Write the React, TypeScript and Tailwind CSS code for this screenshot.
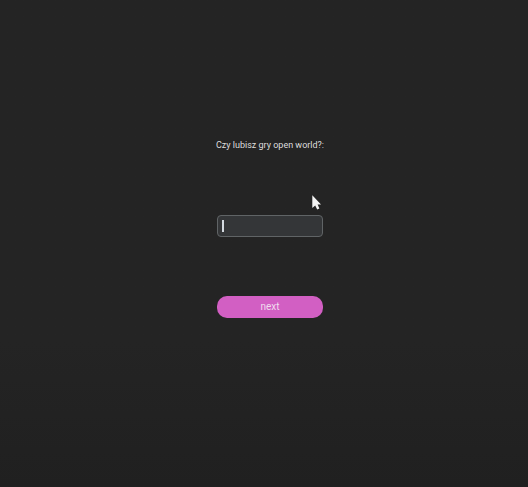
import { useState } from "react";

function Pointer() {
  return (
    <svg
      aria-hidden="true"
      viewBox="0 0 9 15"
      className="pointer-events-none absolute right-px bottom-full mb-1.5 h-[15px] w-[9px]"
    >
      <path d="M0.3 0.2V13L3.2 10.4L5.2 14.6L7.4 13.6L5.6 9.4H9Z" fill="#f4f4f4" />
    </svg>
  );
}

export default function App() {
  const [answer, setAnswer] = useState("");

  return (
    <main className="min-h-screen bg-linear-to-b from-[#242424] from-70% to-[#202020] pt-[137px] pl-3 font-['Roboto',sans-serif]">
      <form
        className="flex flex-col items-center"
        onSubmit={(event) => event.preventDefault()}
      >
        <label htmlFor="answer" className="text-[9px] leading-4 text-[#dedede]">
          Czy lubisz gry open world?:
        </label>
        <div className="relative mt-[62px] flex h-[22px] w-[106px] items-center rounded-sm border border-[#606466] bg-[#343638] px-1">
          <span aria-hidden="true" className="h-3 w-0.5 bg-[#d4dae0]" />
          <input
            id="answer"
            type="text"
            value={answer}
            onChange={(event) => setAnswer(event.target.value)}
            className="h-full w-full min-w-0 bg-transparent text-[10px] text-[#dce4ee] caret-transparent outline-none"
          />
          <Pointer />
        </div>
        <button
          type="submit"
          className="mt-[59px] h-[22px] w-[106px] rounded-[10px] bg-[#d25fc3] text-[10px] leading-4 text-[#f0dcee]"
        >
          next
        </button>
      </form>
    </main>
  );
}
